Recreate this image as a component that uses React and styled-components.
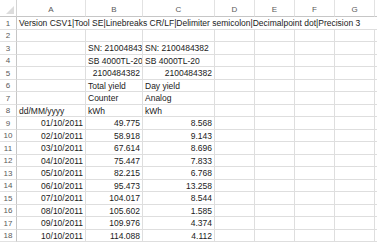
import React from 'react';
import styled, {createGlobalStyle} from 'styled-components';

const Global = createGlobalStyle`
    html, body {
        margin: 0;
        padding: 0;
        background: #ffffff;
    }
    body {
        font-family: "Liberation Sans", Arial, sans-serif;
        font-size: 8.5px;
        color: #1a1a1a;
    }
`;

const Sheet = styled.div`
    display: grid;
    grid-template-columns: 17px 69px 57px 72px 40px 40px 40px 40px 1fr;
    grid-template-rows: 17px repeat(18, 12.5px);
    width: 377px;
    height: 243px;
    overflow: hidden;
`;

const Corner = styled.div`
    position: relative;
    border-right: 1px solid #d4d4d4;
    border-bottom: 1px solid #c6c6c6;
    &::after {
        content: '';
        position: absolute;
        right: 2px;
        bottom: 2px;
        width: 0;
        height: 0;
        border-left: 8px solid transparent;
        border-bottom: 8px solid #dcdcdc;
    }
`;

const ColHead = styled.div`
    display: flex;
    align-items: center;
    justify-content: center;
    padding-top: 3px;
    color: #595959;
    font-size: 8px;
    border-right: 1px solid #e2e2e2;
    border-bottom: 1px solid #c6c6c6;
`;

const RowHead = styled.div`
    display: flex;
    align-items: center;
    justify-content: center;
    padding-top: 1px;
    color: #595959;
    font-size: 8px;
    border-right: 1px solid #c6c6c6;
    border-bottom: 1px solid #e2e2e2;
`;

const Cell = styled.div`
    display: flex;
    align-items: center;
    justify-content: ${p => (p.$right ? 'flex-end' : 'flex-start')};
    grid-column: ${p => (p.$span ? `span ${p.$span}` : 'auto')};
    padding: 1px 2px 0;
    white-space: nowrap;
    overflow: hidden;
    border-right: ${p => (p.$span ? 'none' : '1px solid #dedede')};
    border-bottom: 1px solid #dedede;
`;

const cols = ['A', 'B', 'C', 'D', 'E', 'F', 'G', ''];

const rows = [
    [{t: 'Version CSV1|Tool SE|Linebreaks CR/LF|Delimiter semicolon|Decimalpoint dot|Precision 3', span: 8}],
    [],
    ['', 'SN: 2100484382', 'SN: 2100484382'],
    ['', 'SB 4000TL-20', 'SB 4000TL-20'],
    ['', {t: '2100484382', r: true}, {t: '2100484382', r: true}],
    ['', 'Total yield', 'Day yield'],
    ['', 'Counter', 'Analog'],
    ['dd/MM/yyyy', 'kWh', 'kWh'],
    ['01/10/2011', '49.775', '8.568'],
    ['02/10/2011', '58.918', '9.143'],
    ['03/10/2011', '67.614', '8.696'],
    ['04/10/2011', '75.447', '7.833'],
    ['05/10/2011', '82.215', '6.768'],
    ['06/10/2011', '95.473', '13.258'],
    ['07/10/2011', '104.017', '8.544'],
    ['08/10/2011', '105.602', '1.585'],
    ['09/10/2011', '109.976', '4.374'],
    ['10/10/2011', '114.088', '4.112']
];

function renderRow(row, i) {
    const out = [<RowHead key={`h${i}`}>{i + 1}</RowHead>];
    if (row.length && row[0].span) {
        out.push(<Cell key={`c${i}`} $span={row[0].span}>{row[0].t}</Cell>);
        return out;
    }
    const numeric = i >= 8;
    for (let c = 0; c < 8; c++) {
        let v = row[c];
        let right = numeric;
        if (v && typeof v === 'object') {
            right = v.r;
            v = v.t;
        }
        out.push(<Cell key={`c${i}-${c}`} $right={right}>{v || ''}</Cell>);
    }
    return out;
}

export default function App() {
    return (
        <>
            <Global/>
            <Sheet>
                <Corner/>
                {cols.map((c, i) => <ColHead key={i}>{c}</ColHead>)}
                {rows.map(renderRow)}
            </Sheet>
        </>
    );
}
